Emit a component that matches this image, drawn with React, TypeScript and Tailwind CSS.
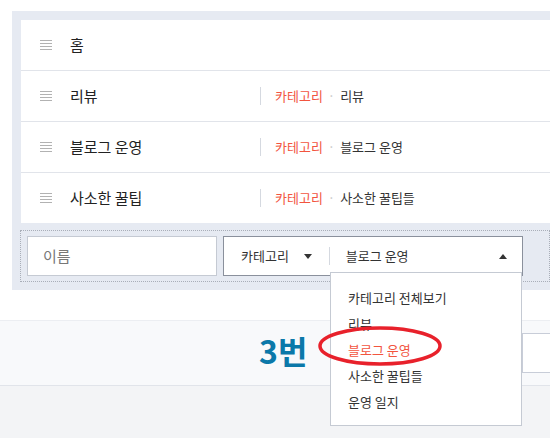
const font = { fontFamily: '"Noto Sans CJK KR", "Noto Sans", sans-serif' };

const rows = [
  { title: "홈", sub: "" },
  { title: "리뷰", sub: "리뷰" },
  { title: "블로그 운영", sub: "블로그 운영" },
  { title: "사소한 꿀팁", sub: "사소한 꿀팁들" },
];

const options = ["카테고리 전체보기", "리뷰", "블로그 운영", "사소한 꿀팁들", "운영 일지"];

const Handle = () => (
  <div className="flex flex-col gap-[2px] w-[12px]">
    <span className="h-px bg-[#b2b2b2]" />
    <span className="h-px bg-[#b2b2b2]" />
    <span className="h-px bg-[#b2b2b2]" />
    <span className="h-px bg-[#b2b2b2]" />
  </div>
);

const Caret = ({ up }: { up?: boolean }) => (
  <svg width="8" height="5" viewBox="0 0 8 5" className="shrink-0">
    <path d={up ? "M0 5 L4 0 L8 5 Z" : "M0 0 L8 0 L4 5 Z"} fill="#333" />
  </svg>
);

const App = () => {
  return (
    <div
      className="relative w-[550px] h-[438px] overflow-hidden bg-white text-[#222]"
      style={font}
    >
      <div className="pt-[11px] pl-[12px]">
        <div className="bg-[#e6eaf2] pt-[9px] pb-[8px] pl-[8px]">
          <div className="ml-px bg-white">
            {rows.map((r, i) => (
              <div
                key={r.title}
                className={
                  "flex items-center " +
                  (i < rows.length - 1 ? "h-[51px] border-b border-[#e1e4ea]" : "h-[50px]")
                }
              >
                <div className="ml-[19px]">
                  <Handle />
                </div>
                <div className="ml-[18px] w-[190px] text-[15px]">{r.title}</div>
                {r.sub && (
                  <div className="flex items-center h-[18px] border-l border-[#d5d9e0] pl-[14px] text-[13px]">
                    <span className="text-[#f2553f]">카테고리</span>
                    <span className="mx-[5px] text-[#c8c8c8]">·</span>
                    <span className="text-[#333]">{r.sub}</span>
                  </div>
                )}
              </div>
            ))}
          </div>
          <div className="mt-[7px] flex gap-[6px] border border-dotted border-[#a9aeb8] py-[5px] pl-[6px]">
            <div className="flex items-center shrink-0 w-[190px] h-[40px] bg-white border border-[#c5cad3] pl-[15px] text-[15px] text-[#777]">
              이름
            </div>
            <div className="flex items-center shrink-0 w-[300px] h-[40px] bg-white border border-[#8a909c] text-[13px] text-[#333]">
              <span className="ml-[17px]">카테고리</span>
              <span className="ml-[15px]">
                <Caret />
              </span>
              <span className="ml-[17px] h-[18px] border-l border-[#d5d9e0]" />
              <span className="ml-[16px]">블로그 운영</span>
              <span className="ml-auto mr-[15px]">
                <Caret up />
              </span>
            </div>
          </div>
        </div>
      </div>

      <div className="mt-[30px] h-[66px] bg-[#f8f9fb] border-t border-[#eceef2] border-b border-b-[#e1e4ea] flex items-center">
        <span className="shrink-0 whitespace-nowrap ml-[259px] -mt-[6px] text-[32px] font-bold text-[#0b78a9] leading-none">
          3번
        </span>
        <div className="shrink-0 ml-auto w-[28px] h-[40px] bg-white border border-[#c8cdd8] border-r-0" />
      </div>
      <div className="h-full bg-[#f3f4f6]" />

      <div className="absolute left-[330px] top-[272px] w-[192px] h-[154px] bg-white border border-[#c5cad3] pt-[12px] px-[17px] text-[13px] text-[#333]">
        {options.map((o) => (
          <div
            key={o}
            className={"h-[26px] flex items-center " + (o === "블로그 운영" ? "text-[#f2553f]" : "")}
          >
            {o}
          </div>
        ))}
      </div>

      <svg className="absolute left-[316px] top-[324px]" width="130" height="44" viewBox="0 0 130 44">
        <ellipse cx="64" cy="22" rx="60" ry="18" fill="none" stroke="#e8212b" strokeWidth="3.5" />
      </svg>
    </div>
  );
};

export default App;
